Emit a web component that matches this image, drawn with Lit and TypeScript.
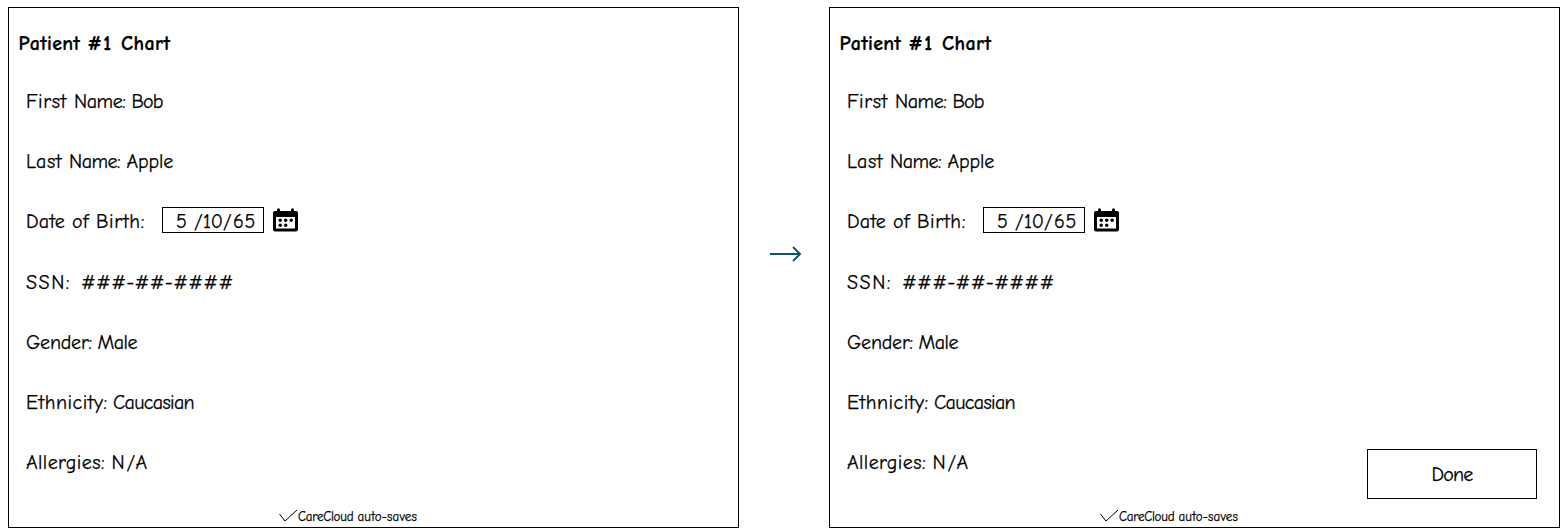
import { LitElement, html, css } from "lit";
import { customElement, property } from "lit/decorators.js";

type Word = [text: string, advance: number];

/** A line of text whose words are tracked to fixed advances. */
@customElement("tracked-text")
class TrackedText extends LitElement {
  @property({ attribute: false }) words: Word[] = [];

  static styles = css`
    :host { display: flex; white-space: pre; }
    .word { display: block; flex: none; }
  `;

  firstUpdated() {
    this.renderRoot.querySelectorAll<HTMLElement>(".word").forEach((el, i) => {
      const [text, advance] = this.words[i];
      const probe = document.createRange();
      probe.selectNodeContents(el);
      const natural = probe.getBoundingClientRect().width;
      el.style.letterSpacing = `${(advance - natural) / text.length}px`;
      el.style.width = `${advance}px`;
    });
  }

  render() {
    return html`${this.words.map(([t]) => html`<span class="word">${t}</span>`)}`;
  }
}

const fields: Word[][] = [
  [["First ", 48], ["Name:", 51.5], [" ", 6], ["Bob", 31]],
  [["Last ", 43], ["Name:", 51], [" ", 6.5], ["Apple", 46.5]],
  [["Date ", 46], ["of ", 24], ["Birth:", 49]],
  [["SSN:", 45], ["  ", 10], ["###-##-####", 152.5]],
  [["Gender:", 66], [" ", 5.5], ["Male", 39.5]],
  [["Ethnicity:", 81.5], [" ", 5.5], ["Caucasian", 81]],
  [["Allergies:", 79], [" ", 6.5], ["N/A", 37.5]],
];

@customElement("patient-chart")
class PatientChart extends LitElement {
  @property({ type: Boolean }) done = false;

  static styles = css`
    :host {
      box-sizing: border-box;
      width: 731px;
      height: 521px;
      flex: none;
      border: 1px solid #000;
      background: #fff;
      display: flex;
      flex-direction: column;
      position: relative;
      -webkit-text-stroke: 0.25px #000;
    }
    .title { font-weight: 700; font-size: 20px; line-height: 28px; padding: 22px 0 0 9.5px; height: 28px; }
    .fields { padding: 13px 0 0 17px; display: grid; grid-auto-rows: 60.17px; }
    .row { display: flex; align-items: center; line-height: 28px; }
    .row > tracked-text { padding-top: 2px; }
    .date {
      box-sizing: border-box; width: 102px; height: 26px; border: 1px solid #000;
      margin-left: 17px; padding: 4px 0 0 13px; display: flex; align-items: center;
      line-height: 20px; position: relative; top: -1px;
    }
    .calendar { display: block; margin-left: 9px; position: relative; top: -1px; }
    .saved { display: flex; align-items: center; height: 20px; font-size: 13px; line-height: 20px; padding-left: 270px; margin-top: auto; margin-bottom: 1px; }
    .saved tracked-text { padding-top: 1px; }
    .tick { display: block; width: 19px; height: 16px; }
    .button {
      position: absolute; box-sizing: border-box; right: 22px; bottom: 28px; width: 170px; height: 50px;
      font: inherit; color: #000; border: 1px solid #000; border-radius: 0; background: #fff; padding: 0;
      display: flex; align-items: center; justify-content: center;
    }
  `;

  render() {
    return html`
      <div class="title"><tracked-text .words=${[["Patient ", 69], ["#1 ", 33.5], ["Chart", 49.5]]}></tracked-text></div>
      <div class="fields">
        ${fields.map((words, i) => html`<div class="row">
          <tracked-text .words=${words}></tracked-text>
          ${i === 2 ? this.dateInput() : null}
        </div>`)}
      </div>
      <div class="saved">
        <svg class="tick" viewBox="0 0 19 16"><path d="M.5 6 6 13 18 2" fill="none" stroke="#000"/></svg>
        <tracked-text .words=${[["CareCloud ", 59.5], ["auto-saves", 59.5]]}></tracked-text>
      </div>
      ${this.done ? html`<button class="button"><tracked-text .words=${[["Done", 41]]}></tracked-text></button>` : null}
    `;
  }

  private dateInput() {
    return html`
      <div class="date"><tracked-text .words=${[["5 ", 18], ["/", 9], ["10", 20], ["/", 10], ["65", 23]]}></tracked-text></div>
      <svg class="calendar" width="25" height="24" viewBox="0 0 25 24">
        <path d="M2 3H4V1.8a1.5 1.5 0 0 1 3 0V3H18V1.8a1.5 1.5 0 0 1 3 0V3h2a2 2 0 0 1 2 2V21.500a2 2 0 0 1-2 2H2a2 2 0 0 1-2-2V5a2 2 0 0 1 2-2Z"/>
        <path d="M3 9H22V20.5H3Z" fill="#fff"/>
        <g><circle cx="7.200" cy="12.300" r="1.700"/><circle cx="12.700" cy="12.300" r="1.700"/><circle cx="18.200" cy="12.300" r="1.700"/><circle cx="7.200" cy="17.300" r="1.700"/><circle cx="12.700" cy="17.300" r="1.700"/></g>
      </svg>`;
  }
}

@customElement("app-root")
class AppRoot extends LitElement {
  static styles = css`
    :host {
      display: flex; align-items: flex-start; box-sizing: border-box;
      width: 1560px; height: 528px; padding: 7px 0 0 8px; overflow: hidden; background: #fff; color: #000;
      font: 20px "Comic Sans MS", "Comic Neue", cursive;
    }
    .between { box-sizing: border-box; width: 90px; height: 521px; flex: none; display: flex; align-items: center; padding-left: 31px; }
    .arrow { display: block; width: 32px; height: 16px; margin-bottom: 27px; }
  `;

  render() {
    return html`
      <patient-chart></patient-chart>
      <div class="between">
        <svg class="arrow" viewBox="0 0 32 16"><path d="M0 8H30M23 1 30 8 23 15" fill="none" stroke="#0b5768" stroke-width="2"/></svg>
      </div>
      <patient-chart done></patient-chart>
    `;
  }
}
